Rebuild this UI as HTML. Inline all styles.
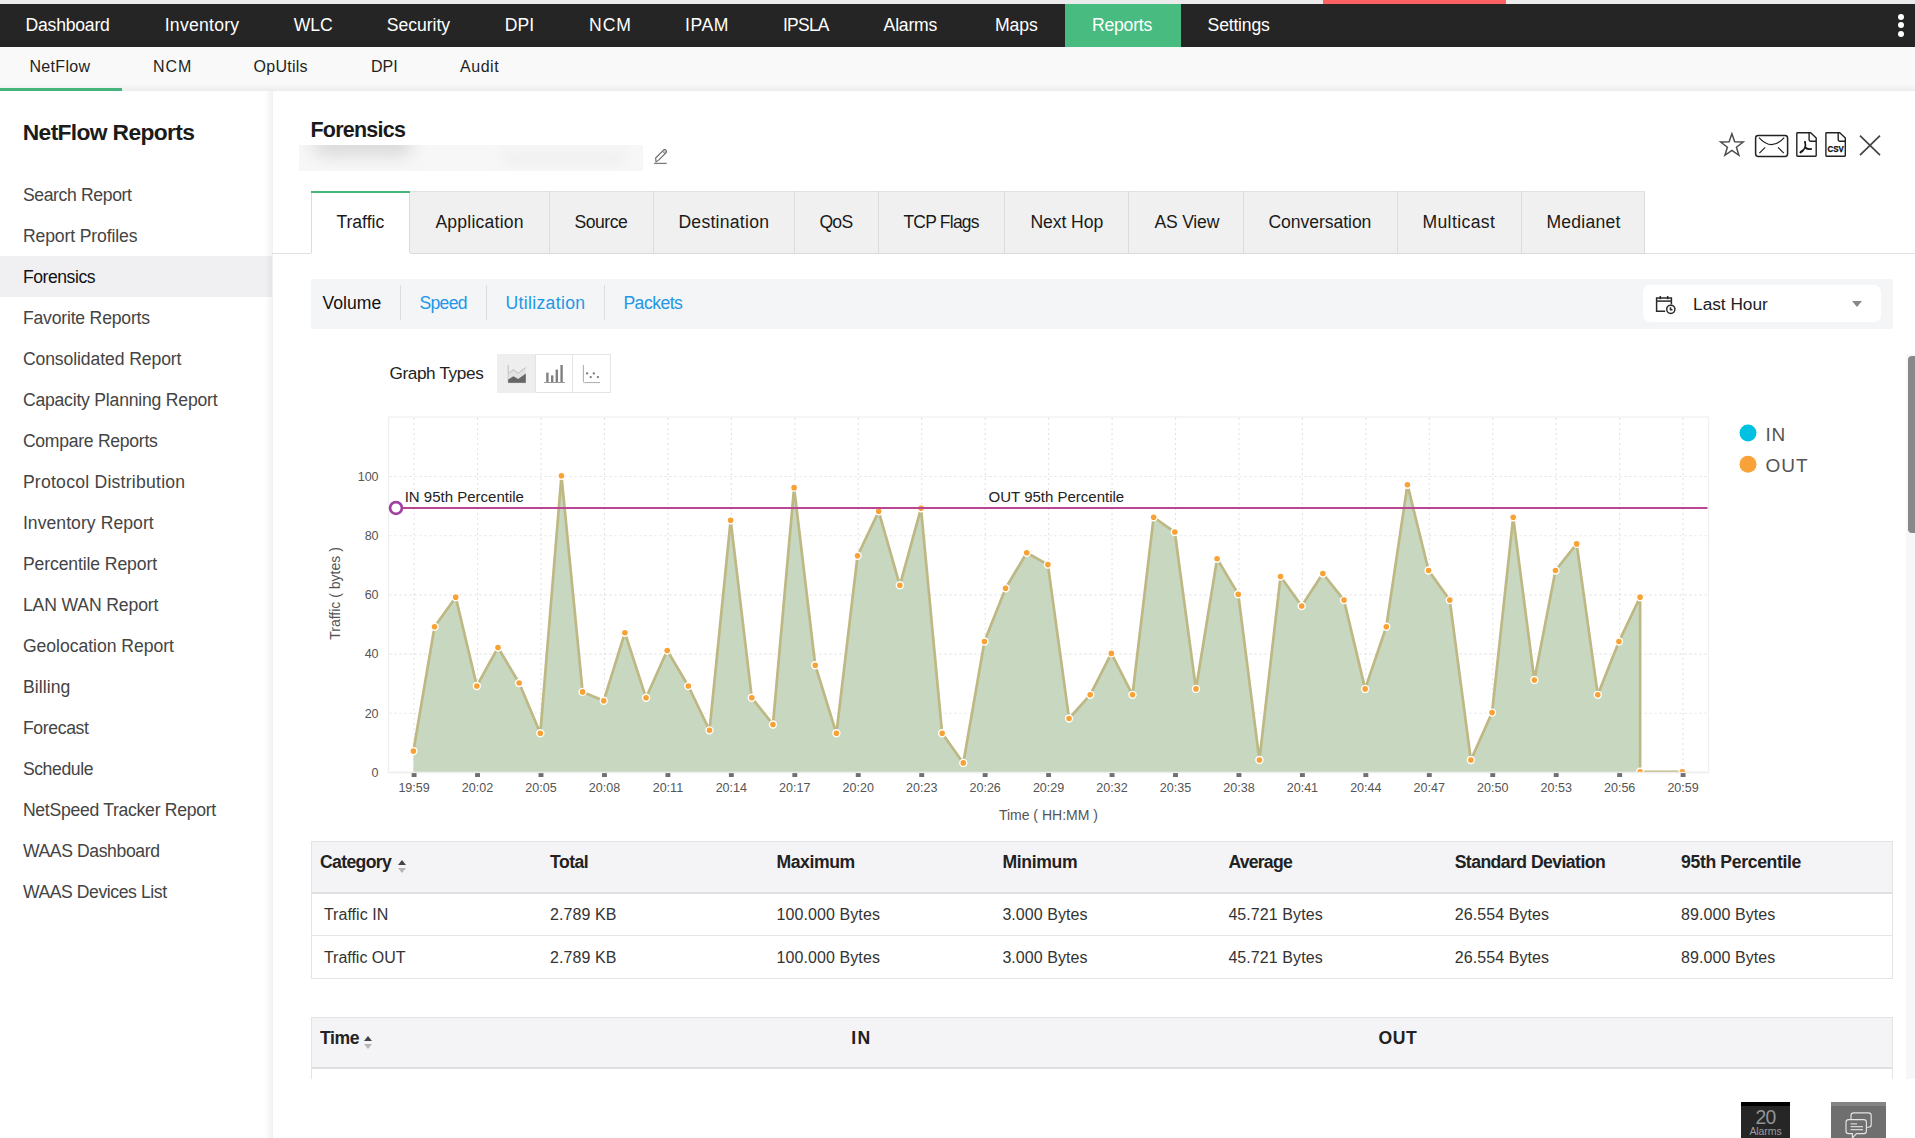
<!DOCTYPE html>
<html lang="en"><head><meta charset="utf-8"><title>NetFlow Reports - Forensics</title>
<style>
html,body{margin:0;padding:0}
body{width:1915px;height:1138px;overflow:hidden;background:#fff;position:relative;font-family:"Liberation Sans",sans-serif}
.a{position:absolute}
.t{position:absolute;white-space:nowrap}
</style></head><body>

<div class="a" style="left:0;top:0;width:1915px;height:4px;background:#ebebeb"></div>
<div class="a" style="left:1323px;top:0;width:183px;height:4px;background:#fd6262"></div>
<div class="a" style="left:0;top:4px;width:1915px;height:43px;background:#252525"></div>
<div class="a" style="left:1064.6px;top:4px;width:116px;height:43px;background:#48bb80"></div>
<div class="a" style="left:1897.7px;top:13.5px;width:6.6px;height:6.6px;border-radius:50%;background:#fff"></div>
<div class="a" style="left:1897.7px;top:21.9px;width:6.6px;height:6.6px;border-radius:50%;background:#fff"></div>
<div class="a" style="left:1897.7px;top:30.5px;width:6.6px;height:6.6px;border-radius:50%;background:#fff"></div>
<div class="a" style="left:0;top:47px;width:1915px;height:44px;background:linear-gradient(to bottom,#f9f9f9 0,#f9f9f9 37px,#ececec 44px)"></div>
<div class="a" style="left:0;top:88px;width:122px;height:3px;background:#45b57c"></div>
<div class="a" style="left:0;top:91px;width:272.8px;height:1047px;background:#fff"></div>
<div class="a" style="left:0;top:256px;width:272px;height:41px;background:#f0f0f2"></div>

<div class="a" style="left:264.8px;top:91px;width:8px;height:1047px;background:linear-gradient(to right,rgba(0,0,0,0),rgba(0,0,0,.06))"></div>
<div class="a" style="left:299px;top:145px;width:344px;height:26px;overflow:hidden;background:#f7f7f7"><div class="a" style="left:14px;top:-13px;width:100px;height:24px;background:#dadada;filter:blur(8px);border-radius:12px"></div><div class="a" style="left:205px;top:6px;width:120px;height:13px;background:#efefef;filter:blur(6px)"></div></div>
<svg class="a" style="left:653px;top:148px" width="16" height="17" viewBox="0 0 16 17" fill="none" stroke="#6a6a6a" stroke-width="1.15"><g transform="translate(7.75,7.45) rotate(-45)"><path d="M-7.9 1.2L-5.4 -1.8H5.5a1.8 1.8 0 0 1 0 3.6H-4.8Z" fill="#fff" stroke-linejoin="round"/><path d="M4.2 -1.8h1.3a1.8 1.8 0 0 1 0 3.6h-1.3Z" fill="#c4c4c4" stroke-width="0.9"/></g><path d="M1.1 15.4H13.7" stroke="#7a7a7a" stroke-width="1.3"/></svg>
<div class="a" style="left:272px;top:252.6px;width:1643px;height:1.2px;background:#e0e0e0"></div>
<div class="a" style="left:410.2px;top:191px;width:1235.3px;height:62.8px;background:#f0f0f0;border-top:1px solid #e2e2e2;border-right:1px solid #dcdcdc;border-bottom:1.8px solid #dadada;box-sizing:border-box"></div>
<div class="a" style="left:548.9px;top:191px;width:1.2px;height:62px;background:#dcdcdc"></div>
<div class="a" style="left:652.8px;top:191px;width:1.2px;height:62px;background:#dcdcdc"></div>
<div class="a" style="left:793.6999999999999px;top:191px;width:1.2px;height:62px;background:#dcdcdc"></div>
<div class="a" style="left:877.8px;top:191px;width:1.2px;height:62px;background:#dcdcdc"></div>
<div class="a" style="left:1004.1999999999999px;top:191px;width:1.2px;height:62px;background:#dcdcdc"></div>
<div class="a" style="left:1127.9px;top:191px;width:1.2px;height:62px;background:#dcdcdc"></div>
<div class="a" style="left:1243.1000000000001px;top:191px;width:1.2px;height:62px;background:#dcdcdc"></div>
<div class="a" style="left:1396.9px;top:191px;width:1.2px;height:62px;background:#dcdcdc"></div>
<div class="a" style="left:1520.7px;top:191px;width:1.2px;height:62px;background:#dcdcdc"></div>
<div class="a" style="left:310.9px;top:191px;width:99.4px;height:63.4px;background:#fff;border-top:2px solid #45b57c;box-sizing:border-box"></div>
<div class="a" style="left:310.9px;top:193px;width:1.1px;height:60.2px;background:#dcdcdc"></div>
<div class="a" style="left:409.4px;top:193px;width:1.1px;height:60.2px;background:#dcdcdc"></div>
<div class="a" style="left:311px;top:279px;width:1582px;height:49.5px;background:#f4f5f7"></div>
<div class="a" style="left:399.9px;top:285px;width:1.2px;height:35px;background:#dcdde0"></div>
<div class="a" style="left:485.9px;top:285px;width:1.2px;height:35px;background:#dcdde0"></div>
<div class="a" style="left:603.8px;top:285px;width:1.2px;height:35px;background:#dcdde0"></div>
<div class="a" style="left:1643px;top:285px;width:238.4px;height:37px;background:#fff;border-radius:7px"></div>
<svg class="a" style="left:1655px;top:295px" width="22" height="20" viewBox="0 0 22 20" fill="none" stroke="#2a2a2a" stroke-width="1.5"><path d="M10.2 16.3H1.6V2.9H16.4V9.6"/><path d="M1.6 6.1H16.4"/><path d="M5.3 1V4.2M12.7 1V4.2"/><circle cx="15.8" cy="14.3" r="4.1" fill="#fff"/><path d="M15.5 12.2V14.8H17.5" stroke-width="1.6"/></svg>
<div class="a" style="left:1852px;top:301px;width:0;height:0;border-left:5px solid transparent;border-right:5px solid transparent;border-top:6px solid #888"></div>
<div class="a" style="left:497px;top:354px;width:114px;height:39px;border:1px solid #e4e4e4;box-sizing:border-box;background:#fff"></div>
<div class="a" style="left:497px;top:354px;width:38.6px;height:39px;background:#eeeeee"></div>
<div class="a" style="left:535.3px;top:354px;width:1px;height:39px;background:#e4e4e4"></div>
<div class="a" style="left:572px;top:354px;width:1px;height:39px;background:#e4e4e4"></div>
<svg class="a" style="left:507px;top:364px" width="20" height="20" viewBox="0 0 20 20"><path d="M1.2 1V18.6H19" fill="none" stroke="#bbb" stroke-width="1"/><path d="M1.4 9.5L6.2 5.6L11.3 9.2L18.6 3.6V12L11.3 15L6.2 12.4L1.4 15.4Z" fill="#e2e2e2"/><path d="M1.4 9.5L6.2 5.6L11.3 9.2L18.6 3.6" fill="none" stroke="#bdbdbd" stroke-width="1"/><path d="M1.2 15.4L6.4 12.2L11.2 15L18.8 9.6V18.8H1.2Z" fill="#666"/></svg>
<svg class="a" style="left:544px;top:364px" width="22" height="20" viewBox="0 0 22 20" fill="#808080"><rect x="2.2" y="8.6" width="2.4" height="9.6"/><rect x="7" y="11.4" width="2.4" height="6.8"/><rect x="11.6" y="5.6" width="2.4" height="12.6"/><rect x="16.4" y="1" width="2.4" height="17.2"/><rect x="0" y="18" width="21" height="1" fill="#999"/></svg>
<svg class="a" style="left:582px;top:364px" width="20" height="20" viewBox="0 0 20 20"><path d="M1.4 1V17.6Q1.4 18.6 2.4 18.6H18" fill="none" stroke="#aaa" stroke-width="1"/><g fill="#777"><circle cx="5.1" cy="9.4" r="1.15"/><circle cx="8.7" cy="13.1" r="1.15"/><circle cx="11.8" cy="9.4" r="1.15"/><circle cx="15.9" cy="13.1" r="1.15"/></g></svg>
<svg class="a" style="left:1715px;top:128px" width="175" height="34" viewBox="1715 128 175 34" fill="none" stroke="#444" stroke-width="1.5"><path d="M1731.9 133.8L1734.7 141.8L1743.2 142.0L1736.4 147.2L1738.9 155.3L1731.9 150.5L1724.9 155.3L1727.4 147.2L1720.6 142.0L1729.1 141.8Z" stroke="#4a4a4a" stroke-width="1.45" stroke-linejoin="miter"/><rect x="1755.6" y="135.4" width="32" height="21" rx="2.6" stroke="#222"/><path d="M1759 137.6Q1771.6 151.6 1784.2 137.6" stroke="#222" stroke-width="1.2"/><path d="M1759.4 153.2L1765.2 147.4M1783.8 153.2L1778 147.4" stroke="#222" stroke-width="1.2"/><path d="M1797.5 132.7H1810.7L1816.2 138V155.6Q1816.2 156.3 1815.5 156.3H1797.5Q1796.8 156.3 1796.8 155.6V133.4Q1796.8 132.7 1797.5 132.7Z" stroke="#222" stroke-width="1.4" stroke-linejoin="round"/><path d="M1809.1 133V139.8Q1809.1 141.2 1810.5 141.2H1816.0" stroke="#222" stroke-width="1.4"/><path d="M1805 142.2C1805.7 144.2 1805.5 146 1805.1 147.5C1803.9 150 1802.2 151.5 1800.6 152.3" stroke="#1a1a1a" stroke-width="1.7" stroke-linecap="round"/><path d="M1805.1 147.5C1807 149 1809.4 149.4 1811.2 148.9" stroke="#1a1a1a" stroke-width="1.7" stroke-linecap="round"/><circle cx="1805" cy="142" r="0.9" fill="#1a1a1a" stroke="none"/><path d="M1802.5 150.7L1800.6 152.3" stroke="#1a1a1a" stroke-width="2.1" stroke-linecap="round"/><path d="M1826.6 132.7H1839.8L1845.3 138V155.6Q1845.3 156.3 1844.6 156.3H1826.6Q1825.9 156.3 1825.9 155.6V133.4Q1825.9 132.7 1826.6 132.7Z" stroke="#222" stroke-width="1.4" stroke-linejoin="round"/><path d="M1838.2 133V139.8Q1838.2 141.2 1839.6 141.2H1845.1" stroke="#222" stroke-width="1.4"/><path d="M1860 135.6L1880 155.2M1880 135.6L1860 155.2" stroke="#444" stroke-width="1.7"/><text x="1827.5" y="152.3" font-family='"Liberation Sans", sans-serif' font-size="9.7" font-weight="700" fill="#0a0a0a" stroke="#0a0a0a" stroke-width="0.25" textLength="16.2" lengthAdjust="spacingAndGlyphs">CSV</text></svg>
<svg width="1915" height="1138" viewBox="0 0 1915 1138" style="position:absolute;left:0;top:0" font-family='"Liberation Sans", sans-serif'>
<rect x="388.5" y="417.0" width="1320.0" height="355.5" fill="#fff" stroke="#f0f0f0" stroke-width="1.3"/>
<clipPath id="pc"><rect x="388.5" y="417.0" width="1320.0" height="355.5"/></clipPath>
<path d="M414.10 418.0V772.5M477.55 418.0V772.5M541.00 418.0V772.5M604.45 418.0V772.5M667.90 418.0V772.5M731.35 418.0V772.5M794.80 418.0V772.5M858.25 418.0V772.5M921.70 418.0V772.5M985.15 418.0V772.5M1048.60 418.0V772.5M1112.05 418.0V772.5M1175.50 418.0V772.5M1238.95 418.0V772.5M1302.40 418.0V772.5M1365.85 418.0V772.5M1429.30 418.0V772.5M1492.75 418.0V772.5M1556.20 418.0V772.5M1619.65 418.0V772.5M1683.10 418.0V772.5M389.5 713.30H1707.5M389.5 654.10H1707.5M389.5 594.90H1707.5M389.5 535.70H1707.5M389.5 476.50H1707.5" stroke="#e3e3e3" stroke-width="1.1" stroke-dasharray="2 3" fill="none"/>
<g clip-path="url(#pc)">
<path d="M413.40 751.08 L434.55 626.76 L455.70 597.16 L476.85 685.96 L498.00 647.48 L519.15 683.00 L540.30 733.32 L561.45 475.80 L582.60 691.88 L603.75 700.76 L624.90 632.68 L646.05 697.80 L667.20 650.44 L688.35 685.96 L709.50 730.36 L730.65 520.20 L751.80 697.80 L772.95 724.44 L794.10 487.64 L815.25 665.24 L836.40 733.32 L857.55 555.72 L878.70 511.32 L899.85 585.32 L921.00 508.36 L942.15 733.32 L963.30 762.92 L984.45 641.56 L1005.60 588.28 L1026.75 552.76 L1047.90 564.60 L1069.05 718.52 L1090.20 694.84 L1111.35 653.40 L1132.50 694.84 L1153.65 517.24 L1174.80 532.04 L1195.95 688.92 L1217.10 558.68 L1238.25 594.20 L1259.40 759.96 L1280.55 576.44 L1301.70 606.04 L1322.85 573.48 L1344.00 600.12 L1365.15 688.92 L1386.30 626.76 L1407.45 484.68 L1428.60 570.52 L1449.75 600.12 L1470.90 759.96 L1492.05 712.60 L1513.20 517.24 L1534.35 680.04 L1555.50 570.52 L1576.65 543.88 L1597.80 694.84 L1618.95 641.56 L1640.10 597.16 L1640.10 771.80 L1682.40 771.80 L1682.40 772.5 L413.40 772.5Z" fill="#c2d3b9" fill-opacity="0.9"/>
<path d="M413.40 751.08 L434.55 626.76 L455.70 597.16 L476.85 685.96 L498.00 647.48 L519.15 683.00 L540.30 733.32 L561.45 475.80 L582.60 691.88 L603.75 700.76 L624.90 632.68 L646.05 697.80 L667.20 650.44 L688.35 685.96 L709.50 730.36 L730.65 520.20 L751.80 697.80 L772.95 724.44 L794.10 487.64 L815.25 665.24 L836.40 733.32 L857.55 555.72 L878.70 511.32 L899.85 585.32 L921.00 508.36 L942.15 733.32 L963.30 762.92 L984.45 641.56 L1005.60 588.28 L1026.75 552.76 L1047.90 564.60 L1069.05 718.52 L1090.20 694.84 L1111.35 653.40 L1132.50 694.84 L1153.65 517.24 L1174.80 532.04 L1195.95 688.92 L1217.10 558.68 L1238.25 594.20 L1259.40 759.96 L1280.55 576.44 L1301.70 606.04 L1322.85 573.48 L1344.00 600.12 L1365.15 688.92 L1386.30 626.76 L1407.45 484.68 L1428.60 570.52 L1449.75 600.12 L1470.90 759.96 L1492.05 712.60 L1513.20 517.24 L1534.35 680.04 L1555.50 570.52 L1576.65 543.88 L1597.80 694.84 L1618.95 641.56 L1640.10 597.16 L1640.10 771.80 L1682.40 771.80" fill="none" stroke="#bdb884" stroke-width="2.7" stroke-linejoin="round"/>
<circle cx="413.40" cy="751.08" r="3.5" fill="#f8a134" stroke="#fff" stroke-width="1.4"/>
<circle cx="434.55" cy="626.76" r="3.5" fill="#f8a134" stroke="#fff" stroke-width="1.4"/>
<circle cx="455.70" cy="597.16" r="3.5" fill="#f8a134" stroke="#fff" stroke-width="1.4"/>
<circle cx="476.85" cy="685.96" r="3.5" fill="#f8a134" stroke="#fff" stroke-width="1.4"/>
<circle cx="498.00" cy="647.48" r="3.5" fill="#f8a134" stroke="#fff" stroke-width="1.4"/>
<circle cx="519.15" cy="683.00" r="3.5" fill="#f8a134" stroke="#fff" stroke-width="1.4"/>
<circle cx="540.30" cy="733.32" r="3.5" fill="#f8a134" stroke="#fff" stroke-width="1.4"/>
<circle cx="561.45" cy="475.80" r="3.5" fill="#f8a134" stroke="#fff" stroke-width="1.4"/>
<circle cx="582.60" cy="691.88" r="3.5" fill="#f8a134" stroke="#fff" stroke-width="1.4"/>
<circle cx="603.75" cy="700.76" r="3.5" fill="#f8a134" stroke="#fff" stroke-width="1.4"/>
<circle cx="624.90" cy="632.68" r="3.5" fill="#f8a134" stroke="#fff" stroke-width="1.4"/>
<circle cx="646.05" cy="697.80" r="3.5" fill="#f8a134" stroke="#fff" stroke-width="1.4"/>
<circle cx="667.20" cy="650.44" r="3.5" fill="#f8a134" stroke="#fff" stroke-width="1.4"/>
<circle cx="688.35" cy="685.96" r="3.5" fill="#f8a134" stroke="#fff" stroke-width="1.4"/>
<circle cx="709.50" cy="730.36" r="3.5" fill="#f8a134" stroke="#fff" stroke-width="1.4"/>
<circle cx="730.65" cy="520.20" r="3.5" fill="#f8a134" stroke="#fff" stroke-width="1.4"/>
<circle cx="751.80" cy="697.80" r="3.5" fill="#f8a134" stroke="#fff" stroke-width="1.4"/>
<circle cx="772.95" cy="724.44" r="3.5" fill="#f8a134" stroke="#fff" stroke-width="1.4"/>
<circle cx="794.10" cy="487.64" r="3.5" fill="#f8a134" stroke="#fff" stroke-width="1.4"/>
<circle cx="815.25" cy="665.24" r="3.5" fill="#f8a134" stroke="#fff" stroke-width="1.4"/>
<circle cx="836.40" cy="733.32" r="3.5" fill="#f8a134" stroke="#fff" stroke-width="1.4"/>
<circle cx="857.55" cy="555.72" r="3.5" fill="#f8a134" stroke="#fff" stroke-width="1.4"/>
<circle cx="878.70" cy="511.32" r="3.5" fill="#f8a134" stroke="#fff" stroke-width="1.4"/>
<circle cx="899.85" cy="585.32" r="3.5" fill="#f8a134" stroke="#fff" stroke-width="1.4"/>
<circle cx="921.00" cy="508.36" r="3.5" fill="#f8a134" stroke="#fff" stroke-width="1.4"/>
<circle cx="942.15" cy="733.32" r="3.5" fill="#f8a134" stroke="#fff" stroke-width="1.4"/>
<circle cx="963.30" cy="762.92" r="3.5" fill="#f8a134" stroke="#fff" stroke-width="1.4"/>
<circle cx="984.45" cy="641.56" r="3.5" fill="#f8a134" stroke="#fff" stroke-width="1.4"/>
<circle cx="1005.60" cy="588.28" r="3.5" fill="#f8a134" stroke="#fff" stroke-width="1.4"/>
<circle cx="1026.75" cy="552.76" r="3.5" fill="#f8a134" stroke="#fff" stroke-width="1.4"/>
<circle cx="1047.90" cy="564.60" r="3.5" fill="#f8a134" stroke="#fff" stroke-width="1.4"/>
<circle cx="1069.05" cy="718.52" r="3.5" fill="#f8a134" stroke="#fff" stroke-width="1.4"/>
<circle cx="1090.20" cy="694.84" r="3.5" fill="#f8a134" stroke="#fff" stroke-width="1.4"/>
<circle cx="1111.35" cy="653.40" r="3.5" fill="#f8a134" stroke="#fff" stroke-width="1.4"/>
<circle cx="1132.50" cy="694.84" r="3.5" fill="#f8a134" stroke="#fff" stroke-width="1.4"/>
<circle cx="1153.65" cy="517.24" r="3.5" fill="#f8a134" stroke="#fff" stroke-width="1.4"/>
<circle cx="1174.80" cy="532.04" r="3.5" fill="#f8a134" stroke="#fff" stroke-width="1.4"/>
<circle cx="1195.95" cy="688.92" r="3.5" fill="#f8a134" stroke="#fff" stroke-width="1.4"/>
<circle cx="1217.10" cy="558.68" r="3.5" fill="#f8a134" stroke="#fff" stroke-width="1.4"/>
<circle cx="1238.25" cy="594.20" r="3.5" fill="#f8a134" stroke="#fff" stroke-width="1.4"/>
<circle cx="1259.40" cy="759.96" r="3.5" fill="#f8a134" stroke="#fff" stroke-width="1.4"/>
<circle cx="1280.55" cy="576.44" r="3.5" fill="#f8a134" stroke="#fff" stroke-width="1.4"/>
<circle cx="1301.70" cy="606.04" r="3.5" fill="#f8a134" stroke="#fff" stroke-width="1.4"/>
<circle cx="1322.85" cy="573.48" r="3.5" fill="#f8a134" stroke="#fff" stroke-width="1.4"/>
<circle cx="1344.00" cy="600.12" r="3.5" fill="#f8a134" stroke="#fff" stroke-width="1.4"/>
<circle cx="1365.15" cy="688.92" r="3.5" fill="#f8a134" stroke="#fff" stroke-width="1.4"/>
<circle cx="1386.30" cy="626.76" r="3.5" fill="#f8a134" stroke="#fff" stroke-width="1.4"/>
<circle cx="1407.45" cy="484.68" r="3.5" fill="#f8a134" stroke="#fff" stroke-width="1.4"/>
<circle cx="1428.60" cy="570.52" r="3.5" fill="#f8a134" stroke="#fff" stroke-width="1.4"/>
<circle cx="1449.75" cy="600.12" r="3.5" fill="#f8a134" stroke="#fff" stroke-width="1.4"/>
<circle cx="1470.90" cy="759.96" r="3.5" fill="#f8a134" stroke="#fff" stroke-width="1.4"/>
<circle cx="1492.05" cy="712.60" r="3.5" fill="#f8a134" stroke="#fff" stroke-width="1.4"/>
<circle cx="1513.20" cy="517.24" r="3.5" fill="#f8a134" stroke="#fff" stroke-width="1.4"/>
<circle cx="1534.35" cy="680.04" r="3.5" fill="#f8a134" stroke="#fff" stroke-width="1.4"/>
<circle cx="1555.50" cy="570.52" r="3.5" fill="#f8a134" stroke="#fff" stroke-width="1.4"/>
<circle cx="1576.65" cy="543.88" r="3.5" fill="#f8a134" stroke="#fff" stroke-width="1.4"/>
<circle cx="1597.80" cy="694.84" r="3.5" fill="#f8a134" stroke="#fff" stroke-width="1.4"/>
<circle cx="1618.95" cy="641.56" r="3.5" fill="#f8a134" stroke="#fff" stroke-width="1.4"/>
<circle cx="1640.10" cy="597.16" r="3.5" fill="#f8a134" stroke="#fff" stroke-width="1.4"/>
<circle cx="1640.10" cy="771.80" r="3.5" fill="#f8a134" stroke="#fff" stroke-width="1.4"/>
<circle cx="1682.40" cy="771.80" r="3.5" fill="#f8a134" stroke="#fff" stroke-width="1.4"/>
</g>
<path d="M388.5 772.5H1708.5" stroke="#eeeeee" stroke-width="1.5"/>
<path d="M402 507.95H1707.5" stroke="#ba4693" stroke-width="2"/>
<circle cx="396" cy="507.95" r="5.9" fill="#fff" stroke="#a23fa2" stroke-width="2.7"/>
<rect x="411.65" y="773.1" width="4.9" height="3.9" fill="#707070"/>
<text x="414.10" y="792.2" font-size="12.55" fill="#555" text-anchor="middle">19:59</text>
<rect x="475.10" y="773.1" width="4.9" height="3.9" fill="#707070"/>
<text x="477.55" y="792.2" font-size="12.55" fill="#555" text-anchor="middle">20:02</text>
<rect x="538.55" y="773.1" width="4.9" height="3.9" fill="#707070"/>
<text x="541.00" y="792.2" font-size="12.55" fill="#555" text-anchor="middle">20:05</text>
<rect x="602.00" y="773.1" width="4.9" height="3.9" fill="#707070"/>
<text x="604.45" y="792.2" font-size="12.55" fill="#555" text-anchor="middle">20:08</text>
<rect x="665.45" y="773.1" width="4.9" height="3.9" fill="#707070"/>
<text x="667.90" y="792.2" font-size="12.55" fill="#555" text-anchor="middle">20:11</text>
<rect x="728.90" y="773.1" width="4.9" height="3.9" fill="#707070"/>
<text x="731.35" y="792.2" font-size="12.55" fill="#555" text-anchor="middle">20:14</text>
<rect x="792.35" y="773.1" width="4.9" height="3.9" fill="#707070"/>
<text x="794.80" y="792.2" font-size="12.55" fill="#555" text-anchor="middle">20:17</text>
<rect x="855.80" y="773.1" width="4.9" height="3.9" fill="#707070"/>
<text x="858.25" y="792.2" font-size="12.55" fill="#555" text-anchor="middle">20:20</text>
<rect x="919.25" y="773.1" width="4.9" height="3.9" fill="#707070"/>
<text x="921.70" y="792.2" font-size="12.55" fill="#555" text-anchor="middle">20:23</text>
<rect x="982.70" y="773.1" width="4.9" height="3.9" fill="#707070"/>
<text x="985.15" y="792.2" font-size="12.55" fill="#555" text-anchor="middle">20:26</text>
<rect x="1046.15" y="773.1" width="4.9" height="3.9" fill="#707070"/>
<text x="1048.60" y="792.2" font-size="12.55" fill="#555" text-anchor="middle">20:29</text>
<rect x="1109.60" y="773.1" width="4.9" height="3.9" fill="#707070"/>
<text x="1112.05" y="792.2" font-size="12.55" fill="#555" text-anchor="middle">20:32</text>
<rect x="1173.05" y="773.1" width="4.9" height="3.9" fill="#707070"/>
<text x="1175.50" y="792.2" font-size="12.55" fill="#555" text-anchor="middle">20:35</text>
<rect x="1236.50" y="773.1" width="4.9" height="3.9" fill="#707070"/>
<text x="1238.95" y="792.2" font-size="12.55" fill="#555" text-anchor="middle">20:38</text>
<rect x="1299.95" y="773.1" width="4.9" height="3.9" fill="#707070"/>
<text x="1302.40" y="792.2" font-size="12.55" fill="#555" text-anchor="middle">20:41</text>
<rect x="1363.40" y="773.1" width="4.9" height="3.9" fill="#707070"/>
<text x="1365.85" y="792.2" font-size="12.55" fill="#555" text-anchor="middle">20:44</text>
<rect x="1426.85" y="773.1" width="4.9" height="3.9" fill="#707070"/>
<text x="1429.30" y="792.2" font-size="12.55" fill="#555" text-anchor="middle">20:47</text>
<rect x="1490.30" y="773.1" width="4.9" height="3.9" fill="#707070"/>
<text x="1492.75" y="792.2" font-size="12.55" fill="#555" text-anchor="middle">20:50</text>
<rect x="1553.75" y="773.1" width="4.9" height="3.9" fill="#707070"/>
<text x="1556.20" y="792.2" font-size="12.55" fill="#555" text-anchor="middle">20:53</text>
<rect x="1617.20" y="773.1" width="4.9" height="3.9" fill="#707070"/>
<text x="1619.65" y="792.2" font-size="12.55" fill="#555" text-anchor="middle">20:56</text>
<rect x="1680.65" y="773.1" width="4.9" height="3.9" fill="#707070"/>
<text x="1683.10" y="792.2" font-size="12.55" fill="#555" text-anchor="middle">20:59</text>
<text x="378.6" y="776.80" font-size="12.55" fill="#555" text-anchor="end">0</text>
<text x="378.6" y="717.60" font-size="12.55" fill="#555" text-anchor="end">20</text>
<text x="378.6" y="658.40" font-size="12.55" fill="#555" text-anchor="end">40</text>
<text x="378.6" y="599.20" font-size="12.55" fill="#555" text-anchor="end">60</text>
<text x="378.6" y="540.00" font-size="12.55" fill="#555" text-anchor="end">80</text>
<text x="378.6" y="480.80" font-size="12.55" fill="#555" text-anchor="end">100</text>
<text x="1048.4" y="819.6" font-size="14" fill="#555" text-anchor="middle">Time ( HH:MM )</text>
<text transform="translate(340.3,593.5) rotate(-90)" font-size="14" fill="#555" text-anchor="middle">Traffic ( bytes )</text>
<text x="404.7" y="501.6" font-size="15" fill="#222">IN 95th Percentile</text>
<text x="988.6" y="501.6" font-size="15" fill="#222">OUT 95th Percentile</text>
<circle cx="1748" cy="433.1" r="8.5" fill="#00c1e2"/>
<circle cx="1748" cy="464.2" r="8.5" fill="#f9a23a"/>
</svg>
<div class="a" style="left:311.3px;top:841px;width:1581.4px;height:137.6px;border:1px solid #e4e4e6;box-sizing:border-box;background:#fff"></div>
<div class="a" style="left:312px;top:842px;width:1580px;height:50px;background:#f4f4f6"></div>
<div class="a" style="left:311.3px;top:891.8px;width:1581.4px;height:2px;background:#e0e0e3"></div>
<div class="a" style="left:311.3px;top:934.8px;width:1581.4px;height:1px;background:#e6e6e8"></div>
<div class="a" style="left:397.6px;top:860.0px;width:0;height:0;border-left:4.8px solid transparent;border-right:4.8px solid transparent;border-bottom:5.6px solid #444"></div><div class="a" style="left:397.6px;top:868.2px;width:0;height:0;border-left:4.8px solid transparent;border-right:4.8px solid transparent;border-top:5.6px solid #b6b6b6"></div>
<div class="a" style="left:311.3px;top:1017px;width:1581.4px;height:62px;border:1px solid #e4e4e6;border-bottom:none;box-sizing:border-box;background:#fff"></div>
<div class="a" style="left:312px;top:1018px;width:1580px;height:50px;background:#f4f4f6"></div>
<div class="a" style="left:311.3px;top:1067.4px;width:1581.4px;height:2px;background:#e0e0e3"></div>
<div class="a" style="left:364.4px;top:1036.0px;width:0;height:0;border-left:4.8px solid transparent;border-right:4.8px solid transparent;border-bottom:5.6px solid #444"></div><div class="a" style="left:364.4px;top:1044.2px;width:0;height:0;border-left:4.8px solid transparent;border-right:4.8px solid transparent;border-top:5.6px solid #b6b6b6"></div>
<div class="a" style="left:1906.4px;top:354px;width:8.6px;height:725px;background:#f7f7f7"></div>
<div class="a" style="left:1907.8px;top:356px;width:8px;height:177px;background:#888;border-radius:4px 0 0 4px"></div>
<div class="a" style="left:1741.3px;top:1101.8px;width:48.5px;height:37px;background:#262626;border-top:4.4px solid #000;box-sizing:border-box"></div>
<div class="a" style="left:1831px;top:1102.4px;width:54.8px;height:36px;background:#6f6f6f;border-top:4.9px solid #848484;box-sizing:border-box"></div>
<svg class="a" style="left:1843px;top:1110px" width="32" height="28" viewBox="0 0 32 28" fill="none" stroke="#e4e4e4" stroke-width="1.15"><path d="M8 9V5.4Q8 2.8 10.6 2.8H25.6Q28.2 2.8 28.2 5.4V14.6Q28.2 17.2 25.6 17.2H24"/><path d="M5.6 9.6H20.8Q23.4 9.6 23.4 12.2V21Q23.4 23.6 20.8 23.6H13.4L9.4 28V23.6H5.6Q3 23.6 3 21V12.2Q3 9.6 5.6 9.6Z" fill="#6f6f6f"/><path d="M7.6 13.9H14M7.6 16.7H20M7.6 19.6H20" stroke="#d6d6d6" stroke-width="1.2"/></svg>
<span class="t" style="left:25.5px;top:15px;font-size:17.6px;line-height:21px;color:#ffffff;letter-spacing:-0.22px">Dashboard</span>
<span class="t" style="left:164.7px;top:15px;font-size:17.6px;line-height:21px;color:#ffffff;letter-spacing:0.26px">Inventory</span>
<span class="t" style="left:293.7px;top:15px;font-size:17.6px;line-height:21px;color:#ffffff;letter-spacing:-0.09px">WLC</span>
<span class="t" style="left:386.7px;top:15px;font-size:17.6px;line-height:21px;color:#ffffff;letter-spacing:-0.01px">Security</span>
<span class="t" style="left:504.7px;top:15px;font-size:17.6px;line-height:21px;color:#ffffff;letter-spacing:0.02px">DPI</span>
<span class="t" style="left:589.0px;top:15px;font-size:17.6px;line-height:21px;color:#ffffff;letter-spacing:0.98px">NCM</span>
<span class="t" style="left:685.0px;top:15px;font-size:17.6px;line-height:21px;color:#ffffff;letter-spacing:0.55px">IPAM</span>
<span class="t" style="left:783.0px;top:15px;font-size:17.46px;line-height:21px;color:#ffffff;letter-spacing:-0.74px">IPSLA</span>
<span class="t" style="left:883.6px;top:15px;font-size:17.6px;line-height:21px;color:#ffffff;letter-spacing:-0.20px">Alarms</span>
<span class="t" style="left:995.0px;top:15px;font-size:17.6px;line-height:21px;color:#ffffff;letter-spacing:-0.08px">Maps</span>
<span class="t" style="left:1091.9px;top:15px;font-size:17.6px;line-height:21px;color:#ffffff;letter-spacing:-0.20px">Reports</span>
<span class="t" style="left:1207.6px;top:15px;font-size:17.6px;line-height:21px;color:#ffffff;letter-spacing:-0.20px">Settings</span>
<span class="t" style="left:29.4px;top:57px;font-size:16px;line-height:19px;color:#1f1f1f;letter-spacing:0.35px">NetFlow</span>
<span class="t" style="left:153.0px;top:57px;font-size:16px;line-height:19px;color:#1f1f1f;letter-spacing:0.91px">NCM</span>
<span class="t" style="left:253.6px;top:57px;font-size:16px;line-height:19px;color:#1f1f1f;letter-spacing:0.26px">OpUtils</span>
<span class="t" style="left:371.0px;top:57px;font-size:16px;line-height:19px;color:#1f1f1f;letter-spacing:0.05px">DPI</span>
<span class="t" style="left:460.0px;top:57px;font-size:16px;line-height:19px;color:#1f1f1f;letter-spacing:0.53px">Audit</span>
<span class="t" style="left:22.8px;top:119px;font-size:22.8px;line-height:27px;color:#1b1b1b;letter-spacing:-0.65px;font-weight:700">NetFlow Reports</span>
<span class="t" style="left:22.9px;top:185px;font-size:17.6px;line-height:21px;color:#444;letter-spacing:-0.36px">Search Report</span>
<span class="t" style="left:22.9px;top:226px;font-size:17.6px;line-height:21px;color:#444;letter-spacing:-0.12px">Report Profiles</span>
<span class="t" style="left:22.9px;top:267px;font-size:17.6px;line-height:21px;color:#111;letter-spacing:-0.45px">Forensics</span>
<span class="t" style="left:22.9px;top:308px;font-size:17.6px;line-height:21px;color:#444;letter-spacing:-0.19px">Favorite Reports</span>
<span class="t" style="left:22.9px;top:349px;font-size:17.6px;line-height:21px;color:#444;letter-spacing:-0.10px">Consolidated Report</span>
<span class="t" style="left:22.9px;top:390px;font-size:17.6px;line-height:21px;color:#444;letter-spacing:-0.21px">Capacity Planning Report</span>
<span class="t" style="left:22.9px;top:431px;font-size:17.6px;line-height:21px;color:#444;letter-spacing:-0.28px">Compare Reports</span>
<span class="t" style="left:22.9px;top:472px;font-size:17.6px;line-height:21px;color:#444;letter-spacing:0.24px">Protocol Distribution</span>
<span class="t" style="left:22.9px;top:513px;font-size:17.6px;line-height:21px;color:#444;letter-spacing:0.05px">Inventory Report</span>
<span class="t" style="left:22.9px;top:554px;font-size:17.6px;line-height:21px;color:#444;letter-spacing:-0.11px">Percentile Report</span>
<span class="t" style="left:22.9px;top:595px;font-size:17.6px;line-height:21px;color:#444;letter-spacing:-0.13px">LAN WAN Report</span>
<span class="t" style="left:22.9px;top:636px;font-size:17.6px;line-height:21px;color:#444;letter-spacing:-0.03px">Geolocation Report</span>
<span class="t" style="left:22.9px;top:677px;font-size:17.6px;line-height:21px;color:#444;letter-spacing:0.08px">Billing</span>
<span class="t" style="left:22.9px;top:718px;font-size:17.6px;line-height:21px;color:#444;letter-spacing:-0.34px">Forecast</span>
<span class="t" style="left:22.9px;top:759px;font-size:17.6px;line-height:21px;color:#444;letter-spacing:-0.40px">Schedule</span>
<span class="t" style="left:22.9px;top:800px;font-size:17.6px;line-height:21px;color:#444;letter-spacing:-0.28px">NetSpeed Tracker Report</span>
<span class="t" style="left:22.9px;top:841px;font-size:17.6px;line-height:21px;color:#444;letter-spacing:-0.39px">WAAS Dashboard</span>
<span class="t" style="left:22.9px;top:882px;font-size:17.6px;line-height:21px;color:#444;letter-spacing:-0.42px">WAAS Devices List</span>
<span class="t" style="left:310.4px;top:117px;font-size:21.49px;line-height:26px;color:#1b1b1b;letter-spacing:-0.75px;font-weight:700">Forensics</span>
<span class="t" style="left:336.4px;top:212px;font-size:17.6px;line-height:21px;color:#1a1a1a;letter-spacing:-0.01px">Traffic</span>
<span class="t" style="left:435.4px;top:212px;font-size:17.6px;line-height:21px;color:#1a1a1a;letter-spacing:0.21px">Application</span>
<span class="t" style="left:574.4px;top:212px;font-size:17.6px;line-height:21px;color:#1a1a1a;letter-spacing:-0.48px">Source</span>
<span class="t" style="left:678.4px;top:212px;font-size:17.6px;line-height:21px;color:#1a1a1a;letter-spacing:0.26px">Destination</span>
<span class="t" style="left:819.4px;top:212px;font-size:17.6px;line-height:21px;color:#1a1a1a;letter-spacing:-0.74px">QoS</span>
<span class="t" style="left:903.4px;top:212px;font-size:17.46px;line-height:21px;color:#1a1a1a;letter-spacing:-0.74px">TCP Flags</span>
<span class="t" style="left:1030.4px;top:212px;font-size:17.6px;line-height:21px;color:#1a1a1a;letter-spacing:-0.08px">Next Hop</span>
<span class="t" style="left:1154.4px;top:212px;font-size:17.6px;line-height:21px;color:#1a1a1a;letter-spacing:-0.20px">AS View</span>
<span class="t" style="left:1268.4px;top:212px;font-size:17.6px;line-height:21px;color:#1a1a1a;letter-spacing:-0.06px">Conversation</span>
<span class="t" style="left:1422.4px;top:212px;font-size:17.6px;line-height:21px;color:#1a1a1a;letter-spacing:0.39px">Multicast</span>
<span class="t" style="left:1546.4px;top:212px;font-size:17.6px;line-height:21px;color:#1a1a1a;letter-spacing:0.23px">Medianet</span>
<span class="t" style="left:322.4px;top:293px;font-size:17.6px;line-height:21px;color:#111;letter-spacing:0.02px">Volume</span>
<span class="t" style="left:419.4px;top:293px;font-size:17.6px;line-height:21px;color:#2297e8;letter-spacing:-0.68px">Speed</span>
<span class="t" style="left:505.4px;top:293px;font-size:17.6px;line-height:21px;color:#2297e8;letter-spacing:0.34px">Utilization</span>
<span class="t" style="left:623.4px;top:293px;font-size:17.6px;line-height:21px;color:#2297e8;letter-spacing:-0.51px">Packets</span>
<span class="t" style="left:1693.1px;top:294px;font-size:17.3px;line-height:21px;color:#222;letter-spacing:-0.03px">Last Hour</span>
<span class="t" style="left:389.4px;top:363px;font-size:17.2px;line-height:21px;color:#222;letter-spacing:-0.37px">Graph Types</span>
<span class="t" style="left:1765.6px;top:423px;font-size:19px;line-height:23px;color:#555;letter-spacing:0.60px">IN</span>
<span class="t" style="left:1765.4px;top:454px;font-size:19px;line-height:23px;color:#555;letter-spacing:1.10px">OUT</span>
<span class="t" style="left:319.9px;top:852px;font-size:17.6px;line-height:21px;color:#222;letter-spacing:-0.62px;font-weight:700">Category</span>
<span class="t" style="left:550.0px;top:852px;font-size:17.6px;line-height:21px;color:#222;letter-spacing:-0.50px;font-weight:700">Total</span>
<span class="t" style="left:776.4px;top:852px;font-size:17.6px;line-height:21px;color:#222;letter-spacing:-0.38px;font-weight:700">Maximum</span>
<span class="t" style="left:1002.4px;top:852px;font-size:17.6px;line-height:21px;color:#222;letter-spacing:-0.33px;font-weight:700">Minimum</span>
<span class="t" style="left:1228.4px;top:852px;font-size:17.6px;line-height:21px;color:#222;letter-spacing:-0.75px;font-weight:700">Average</span>
<span class="t" style="left:1454.7px;top:852px;font-size:17.6px;line-height:21px;color:#222;letter-spacing:-0.55px;font-weight:700">Standard Deviation</span>
<span class="t" style="left:1681.0px;top:852px;font-size:17.6px;line-height:21px;color:#222;letter-spacing:-0.34px;font-weight:700">95th Percentile</span>
<span class="t" style="left:323.9px;top:905px;font-size:16px;line-height:19px;color:#333;letter-spacing:0.04px">Traffic IN</span>
<span class="t" style="left:550.0px;top:905px;font-size:16px;line-height:19px;color:#333;letter-spacing:0.09px">2.789 KB</span>
<span class="t" style="left:776.4px;top:905px;font-size:16px;line-height:19px;color:#333;letter-spacing:0.10px">100.000 Bytes</span>
<span class="t" style="left:1002.4px;top:905px;font-size:16px;line-height:19px;color:#333;letter-spacing:0.05px">3.000 Bytes</span>
<span class="t" style="left:1228.4px;top:905px;font-size:16px;line-height:19px;color:#333;letter-spacing:0.08px">45.721 Bytes</span>
<span class="t" style="left:1454.7px;top:905px;font-size:16px;line-height:19px;color:#333;letter-spacing:0.08px">26.554 Bytes</span>
<span class="t" style="left:1681.0px;top:905px;font-size:16px;line-height:19px;color:#333;letter-spacing:0.08px">89.000 Bytes</span>
<span class="t" style="left:323.9px;top:948px;font-size:16px;line-height:19px;color:#333;letter-spacing:-0.01px">Traffic OUT</span>
<span class="t" style="left:550.0px;top:948px;font-size:16px;line-height:19px;color:#333;letter-spacing:0.09px">2.789 KB</span>
<span class="t" style="left:776.4px;top:948px;font-size:16px;line-height:19px;color:#333;letter-spacing:0.10px">100.000 Bytes</span>
<span class="t" style="left:1002.4px;top:948px;font-size:16px;line-height:19px;color:#333;letter-spacing:0.05px">3.000 Bytes</span>
<span class="t" style="left:1228.4px;top:948px;font-size:16px;line-height:19px;color:#333;letter-spacing:0.08px">45.721 Bytes</span>
<span class="t" style="left:1454.7px;top:948px;font-size:16px;line-height:19px;color:#333;letter-spacing:0.08px">26.554 Bytes</span>
<span class="t" style="left:1681.0px;top:948px;font-size:16px;line-height:19px;color:#333;letter-spacing:0.08px">89.000 Bytes</span>
<span class="t" style="left:319.9px;top:1028px;font-size:17.6px;line-height:21px;color:#222;letter-spacing:-0.39px;font-weight:700">Time</span>
<span class="t" style="left:851.2px;top:1028px;font-size:17.6px;line-height:21px;color:#222;letter-spacing:1.50px;font-weight:700">IN</span>
<span class="t" style="left:1378.4px;top:1028px;font-size:17.6px;line-height:21px;color:#222;letter-spacing:0.60px;font-weight:700">OUT</span>
<span class="t" style="left:1755.6px;top:1106px;font-size:19.37px;line-height:23px;color:#8f9499;letter-spacing:-0.75px">20</span>
<span class="t" style="left:1749.4px;top:1125px;font-size:10.5px;line-height:13px;color:#9c9c9c;letter-spacing:-0.07px">Alarms</span>
</body></html>
